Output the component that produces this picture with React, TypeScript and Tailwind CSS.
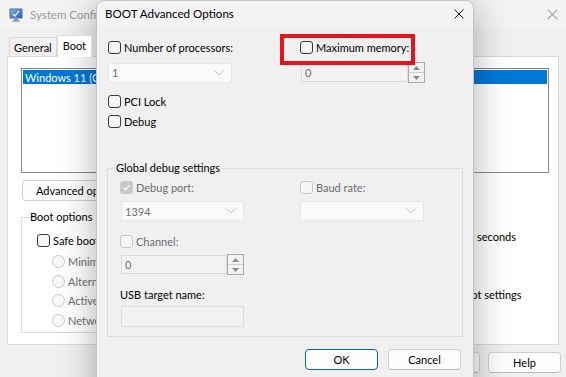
import React from "react";

type BoxState = "normal" | "disabled" | "checkedDisabled";

function Box({ state = "normal" }: { state?: BoxState }) {
  if (state === "checkedDisabled") {
    return (
      <span className="w-[13px] h-[13px] rounded-[3px] bg-[#c9c9c9] flex items-center justify-center shrink-0">
        <svg width="9" height="9" viewBox="0 0 9 9">
          <path d="M1.6 4.7 L3.6 6.6 L7.5 2.3" stroke="#ffffff" strokeWidth="1.2" fill="none" />
        </svg>
      </span>
    );
  }
  return (
    <span
      className={
        state === "disabled"
          ? "w-[13px] h-[13px] rounded-[3px] border border-[#c8c8c8] bg-[#f6f6f6] shrink-0"
          : "w-[13px] h-[13px] rounded-[3px] border border-[#3a3a3a] bg-[#f6f6f6] shrink-0"
      }
    />
  );
}

function Check({ label, state = "normal" }: { label: string; state?: BoxState }) {
  return (
    <div className="h-[15px] flex items-center gap-[3px] whitespace-nowrap">
      <Box state={state} />
      <span className={state === "normal" ? "text-[#000000]" : "text-[#6d6d6d]"}>{label}</span>
    </div>
  );
}

function Radio({ label }: { label: string }) {
  return (
    <div className="h-[15px] flex items-center gap-[3px] whitespace-nowrap">
      <span className="w-[13px] h-[13px] rounded-full border border-[#c8c8c8] bg-[#f8f8f8] shrink-0" />
      <span className="text-[#6d6d6d]">{label}</span>
    </div>
  );
}

function Chevron() {
  return (
    <svg width="10" height="6" viewBox="0 0 10 6" className="shrink-0">
      <path d="M0.5 0.5 L5 5 L9.5 0.5" stroke="#c4c4c4" strokeWidth="1" fill="none" />
    </svg>
  );
}

function Combo({ value, width }: { value: string; width: string }) {
  return (
    <div
      className={`${width} h-[20px] border border-[#e6e6e6] bg-[#fafafa] rounded-[2px] flex items-center pl-[3px] pr-[7px] text-[#6d6d6d]`}
    >
      <span className="flex-1">{value}</span>
      <Chevron />
    </div>
  );
}

function Spin({ value, width }: { value: string; width: string }) {
  return (
    <div className="flex items-center">
      <div className={`${width} h-[19px] border border-[#dadada] bg-[#f2f2f2] flex items-center pl-[3px] text-[#6d6d6d]`}>
        {value}
      </div>
      <div className="w-[17px] h-[21px] flex flex-col border border-[#a9a9a9] bg-[#f2f2f2]">
        <div className="flex-1 flex items-center justify-center border-b border-[#d0d0d0]">
          <svg width="7" height="4" viewBox="0 0 7 4">
            <path d="M0 4 L3.5 0 L7 4 Z" fill="#8a8a8a" />
          </svg>
        </div>
        <div className="flex-1 flex items-center justify-center">
          <svg width="7" height="4" viewBox="0 0 7 4">
            <path d="M0 0 L3.5 4 L7 0 Z" fill="#8a8a8a" />
          </svg>
        </div>
      </div>
    </div>
  );
}

function CloseX({ color, size }: { color: string; size: number }) {
  return (
    <svg width={size} height={size} viewBox="0 0 10 10">
      <path d="M0.5 0.5 L9.5 9.5 M9.5 0.5 L0.5 9.5" stroke={color} strokeWidth="1" />
    </svg>
  );
}

function MsIcon() {
  return (
    <svg width="14" height="14" viewBox="0 0 14 14">
      <defs>
        <linearGradient id="scr" x1="0" y1="0" x2="1" y2="1">
          <stop offset="0" stopColor="#7fb6ee" />
          <stop offset="1" stopColor="#1d5fc2" />
        </linearGradient>
      </defs>
      <rect x="0.5" y="0.5" width="13" height="10" rx="1" fill="#5a6f8f" />
      <rect x="1.5" y="1.5" width="11" height="8" fill="url(#scr)" />
      <path d="M4 6 L6 8 L10 3" stroke="#ffffff" strokeWidth="1.2" fill="none" />
      <rect x="5" y="11" width="4" height="1.5" fill="#6b7c96" />
      <rect x="3" y="12.5" width="8" height="1.2" fill="#8a98ad" />
    </svg>
  );
}

function Button({ label, primary = false, width = "w-[73px]" }: { label: string; primary?: boolean; width?: string }) {
  return (
    <div
      className={
        primary
          ? `${width} h-[21px] rounded-[4px] border border-[#0067c0] bg-[#fdfdfd] flex items-center justify-center text-black`
          : `${width} h-[21px] rounded-[4px] border border-[#d0d0d0] border-b-[#b8b8b8] bg-[#fdfdfd] flex items-center justify-center text-black`
      }
    >
      {label}
    </div>
  );
}

export default function App() {
  return (
    <div className="relative w-[566px] h-[377px] overflow-hidden bg-[#f0f0f0] text-[11px] leading-[15px] text-black font-['Lato',sans-serif]">
      {/* Background window: System Configuration */}
      <div className="flex flex-col h-full">
        <div className="h-[29px] shrink-0 flex items-center pl-[9px] pr-[8px] bg-[#f3f3f3]">
          <MsIcon />
          <span className="ml-[7px] text-[11.5px] text-[#9b9b9b]">System Configuration</span>
          <span className="ml-auto">
            <CloseX color="#a0a0a0" size={11} />
          </span>
        </div>
        <div className="h-[27px] shrink-0 flex items-end pl-[9px]">
          <div className="h-[19px] px-[4px] border border-b-0 border-[#d9d9d9] flex items-center">General</div>
          <div className="h-[22px] px-[5px] border border-b-0 border-[#d9d9d9] bg-white -mb-px relative z-10 flex items-center pb-[3px]">
            Boot
          </div>
        </div>
        <div className="mx-[7px] h-[289px] shrink-0 border border-[#d9d9d9] bg-white flex flex-col pl-[13px] pr-[10px] pt-[11px]">
          <div className="w-[528px] h-[105px] border border-[#828790] bg-white p-[1px]">
            <div className="h-[14px] bg-[#0078d7] text-white pl-[2px] flex items-center whitespace-nowrap">
              Windows 11 (C:\WINDOWS)
            </div>
          </div>
          <div className="flex">
            <div className="flex flex-col w-[230px]">
              <div className="mt-[7px] ml-[1px] w-[130px] h-[21px] border border-[#d0d0d0] rounded-[4px] bg-[#fdfdfd] flex items-center pl-[13px] whitespace-nowrap">
                Advanced options...
              </div>
              <fieldset className="mt-[8px] w-[230px] h-[124px] border border-[#dcdcdc] pl-[15px]">
                <legend className="ml-[6px] -translate-x-[15px] px-[2px] leading-[16px]">Boot options</legend>
                <div className="mt-[8px]">
                  <Check label="Safe boot" />
                </div>
                <div className="ml-[15px] mt-[6px] flex flex-col gap-[4.5px]">
                  <Radio label="Minimal" />
                  <Radio label="Alternate shell" />
                  <Radio label="Active Directory" />
                  <Radio label="Network" />
                </div>
              </fieldset>
            </div>
            <div className="ml-[168px] flex flex-col">
              <div className="mt-[36px] leading-[15px]">Timeout:</div>
              <div className="mt-[2px] flex items-center gap-[4px]">
                <div className="w-[54px] h-[21px] border border-[#828790] bg-white flex items-center pl-[3px]">30</div>
                <span>seconds</span>
              </div>
              <div className="mt-[40px] -ml-[8px] flex items-start gap-[3px]">
                <span className="mt-[1px]">
                  <Box />
                </span>
                <span className="leading-[15px] whitespace-nowrap">
                  Make all boot settings
                  <br />
                  permanent
                </span>
              </div>
            </div>
          </div>
        </div>
        <div className="flex justify-end gap-[8px] pr-[5px] mt-[7px]">
          <Button label="OK" />
          <Button label="Cancel" />
          <Button label="Apply" />
          <Button label="Help" />
        </div>
      </div>

      {/* Foreground dialog: BOOT Advanced Options */}
      <div className="absolute left-[96px] top-0 w-[378px] h-[420px] rounded-t-[8px] border border-[#c4c4c4] bg-[#f0f0f0] shadow-[0_6px_36px_rgba(0,0,0,0.32)] flex flex-col">
        <div className="h-[25px] shrink-0 flex items-center pl-[8px] pr-[9px] rounded-t-[8px] bg-[#f3f3f3]">
          <span className="text-[11.6px]">BOOT Advanced Options</span>
          <span className="ml-auto">
            <CloseX color="#1a1a1a" size={10} />
          </span>
        </div>
        <div className="pl-[11px] pt-[14px] flex flex-col">
          <div className="grid grid-cols-[192px_1fr]">
            <Check label="Number of processors:" />
            <Check label="Maximum memory:" />
          </div>
          <div className="grid grid-cols-[192px_1fr] mt-[7px] items-center">
            <Combo value="1" width="w-[124px]" />
            <div className="pl-[1px]">
              <Spin value="0" width="w-[107px]" />
            </div>
          </div>
          <div className="mt-[11px]">
            <Check label="PCI Lock" />
          </div>
          <div className="mt-[5px]">
            <Check label="Debug" />
          </div>
          <fieldset className="mt-[31px] -ml-[1px] w-[356px] h-[177px] border border-[#dcdcdc] pl-[12px]">
            <legend className="ml-[-6px] px-[2px] leading-[16px]">Global debug settings</legend>
            <div className="pt-[4px] grid grid-cols-[180px_1fr]">
              <Check label="Debug port:" state="checkedDisabled" />
              <Check label="Baud rate:" state="disabled" />
            </div>
            <div className="mt-[6px] grid grid-cols-[180px_1fr]">
              <div className="pl-[1px]">
                <Combo value="1394" width="w-[123px]" />
              </div>
              <Combo value="" width="w-[124px]" />
            </div>
            <div className="mt-[13px]">
              <Check label="Channel:" state="disabled" />
            </div>
            <div className="mt-[5px] pl-[1px]">
              <Spin value="0" width="w-[106px]" />
            </div>
            <div className="mt-[12px] leading-[16px]">USB target name:</div>
            <div className="mt-[3px] ml-[1px] w-[123px] h-[21px] border border-[#dcdcdc] bg-[#f2f2f2]" />
          </fieldset>
          <div className="mt-[12px] flex justify-end gap-[10px] pr-[12px]">
            <Button label="OK" primary />
            <Button label="Cancel" />
          </div>
        </div>
      </div>

      {/* Red highlight annotation */}
      <div className="absolute left-[280px] top-[34px] w-[135px] h-[31px] border-[4px] border-[#e3141b]" />
    </div>
  );
}
